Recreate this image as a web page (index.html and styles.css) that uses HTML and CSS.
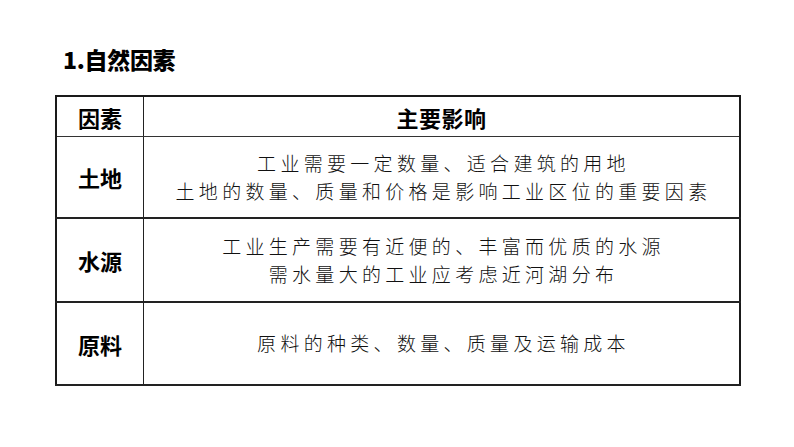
FILE: index.html
```html
<!DOCTYPE html>
<html lang="zh-CN">
<head>
<meta charset="utf-8">
<link rel="stylesheet" href="styles.css">
</head>
<body>
<div class="page">
  <h1 class="title">1.自然因素</h1>
  <table class="factors">
    <thead>
      <tr><th class="c-key">因素</th><th class="c-val">主要影响</th></tr>
    </thead>
    <tbody>
      <tr class="r1">
        <td class="c-key">土地</td>
        <td class="c-val"><p>工业需要一定数量、适合建筑的用地</p><p>土地的数量、质量和价格是影响工业区位的重要因素</p></td>
      </tr>
      <tr class="r2">
        <td class="c-key">水源</td>
        <td class="c-val"><p>工业生产需要有近便的、丰富而优质的水源</p><p>需水量大的工业应考虑近河湖分布</p></td>
      </tr>
      <tr class="r3">
        <td class="c-key">原料</td>
        <td class="c-val"><p>原料的种类、数量、质量及运输成本</p></td>
      </tr>
    </tbody>
  </table>
</div>
</body>
</html>
```

FILE: styles.css
```css
html, body {
  margin: 0;
  padding: 0;
  background: #ffffff;
}
body {
  font-family: "Noto Sans CJK SC", "Noto Sans", sans-serif;
  color: #111;
}
.page {
  width: 794px;
  height: 447px;
  padding: 44px 0 0 55px;
  box-sizing: border-box;
}
.title {
  margin: 0 0 0 8px;
  font-size: 23px;
  line-height: 30px;
  font-weight: 900;
  color: #000;
  letter-spacing: -0.3px;
}
.factors {
  margin-top: 21px;
  width: 686px;
  border-collapse: collapse;
  border: 2px solid #1a1a1a;
  table-layout: fixed;
}
.factors th, .factors td {
  padding: 0;
  text-align: center;
  vertical-align: middle;
}
.factors th.c-key, .factors td.c-key {
  width: 86px;
  border-right: 1.5px solid #222;
}
.factors th {
  height: 39px;
  font-size: 22px;
  font-weight: 700;
  color: #000;
  border-bottom: 1px solid #333;
}
.factors th.c-val {
  letter-spacing: 0.5px;
}
.factors td {
  border-bottom: 2px solid #222;
}
.factors td.c-key {
  font-size: 22px;
  font-weight: 700;
  color: #000;
}
.factors tr.r1 td { height: 80px; }
.factors tr.r2 td { height: 82px; }
.factors tr.r3 td { height: 81px; }
.factors td.c-val p {
  margin: 0;
  font-size: 19px;
  line-height: 28.5px;
  font-weight: 300;
  color: #111;
  letter-spacing: 4.3px;
  padding-left: 4px;
}
```
